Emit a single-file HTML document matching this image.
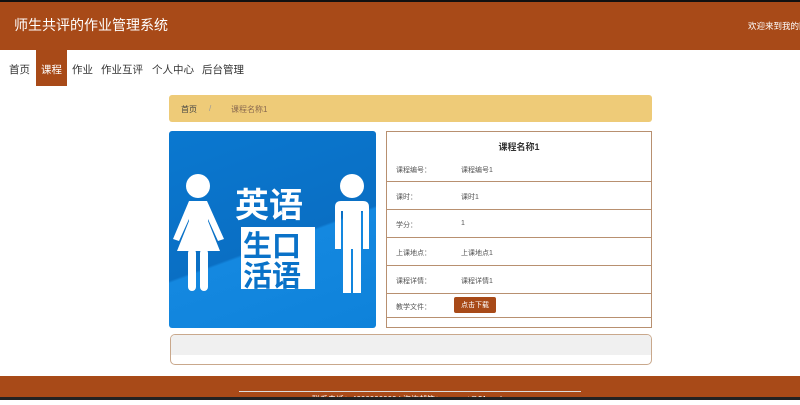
<!DOCTYPE html>
<html><head><meta charset="utf-8"><style>
*{margin:0;padding:0;box-sizing:border-box}
body{width:800px;height:400px;overflow:hidden;background:#fff;font-family:"Liberation Sans","Noto Sans CJK SC",sans-serif;position:relative}
.top{position:absolute;left:0;top:0;width:800px;height:2px;background:#111}
.hd{position:absolute;left:0;top:2px;width:800px;height:48px;background:#a84a18;color:#fff}
.hd .t{position:absolute;left:14px;top:13px;font-size:14px}
.hd .w{position:absolute;left:748px;top:18px;font-size:8.5px;white-space:nowrap}
.nav{position:absolute;top:50px;left:0;height:36px;font-size:10.5px;color:#333}
.nav span{position:absolute;top:12px;white-space:nowrap}
.nav .a{background:#a84a18;color:#fff;top:0;height:36px;padding-top:12px;left:36px;width:31px;text-align:center}
.bc{position:absolute;left:169px;top:95px;width:483px;height:27px;background:#eecb78;border-radius:3px;font-size:8px;color:#555}
.img{position:absolute;left:169px;top:131px;width:207px;height:197px;border-radius:3px;background:linear-gradient(160deg,#0a78d0 0%,#0a6fc4 55%,#1488e0 56%,#0e82da 100%);overflow:hidden}
.tb{position:absolute;left:386px;top:131px;width:266px;height:197px;border:1px solid #b89070;font-size:7px;color:#555}
.r{position:absolute;left:0;width:264px;border-bottom:1px solid #b89070}
.r b{position:absolute;left:9px;font-weight:normal}
.r i{position:absolute;left:74px;font-style:normal}
.box{position:absolute;left:170px;top:334px;width:482px;height:31px;border:1px solid #c9a88c;border-radius:5px;overflow:hidden}
.box div{height:20px;background:#f0f0f0}
.ft{position:absolute;left:0;top:376px;width:800px;height:24px;background:#a84a18}
.ft .l{position:absolute;left:239px;top:15px;width:342px;border-top:1px solid #ddd}
.ft .x{position:absolute;left:312px;top:18px;font-size:8px;color:#fff;white-space:nowrap}
.ft .bl{position:absolute;left:0;top:21px;width:800px;height:3px;background:#222}
</style></head><body>
<div class="top"></div>
<div class="hd"><div class="t">师生共评的作业管理系统</div><div class="w">欢迎来到我的网站</div></div>
<div class="nav">
<span style="left:9px">首页</span><span class="a">课程</span><span style="left:72px">作业</span><span style="left:101px">作业互评</span><span style="left:152px">个人中心</span><span style="left:202px">后台管理</span>
</div>
<div class="bc"><span style="position:absolute;left:12px;top:9px;color:#444">首页</span><span style="position:absolute;left:40px;top:9px;color:#999">/</span><span style="position:absolute;left:62px;top:9px;color:#8a6a50">课程名称1</span></div>
<div class="img">
<svg width="207" height="197" viewBox="0 0 207 197">
<g fill="#fff">
<circle cx="29" cy="55" r="12"/>
<path d="M20 70h18l17 38-6 2-10-22 0 2 12 30H8l12-30v-2L10 110l-6-2z"/>
<rect x="19" y="118" width="8" height="42" rx="4"/><rect x="31" y="118" width="8" height="42" rx="4"/>
<circle cx="183" cy="55" r="12"/>
<path d="M172 70h22q6 0 6 6v42h-6v-38h-2v82h-8v-44h-2v44h-8v-82h-2v38h-6v-42q0-6 6-6z"/>
</g>
<text x="66" y="86" font-size="34" font-weight="bold" fill="#fff" font-family="Noto Sans CJK SC,sans-serif">英语</text>
<rect x="72" y="96" width="74" height="62" fill="#fff"/>
<text x="74" y="125" font-size="29" font-weight="bold" fill="#0a72c8" font-family="Noto Sans CJK SC,sans-serif">生口</text>
<text x="74" y="155" font-size="29" font-weight="bold" fill="#0a72c8" font-family="Noto Sans CJK SC,sans-serif">活语</text>
</svg></div>
<div class="tb">
<div style="position:absolute;left:0;width:264px;top:8px;text-align:center;font-size:9px;font-weight:bold;color:#333">课程名称1</div>
<div class="r" style="top:26px;height:24px"><b style="top:7px">课程编号：</b><i style="top:7px">课程编号1</i></div>
<div class="r" style="top:50px;height:28px"><b style="top:10px">课时：</b><i style="top:10px">课时1</i></div>
<div class="r" style="top:78px;height:28px"><b style="top:10px">学分：</b><i style="top:10px">1</i></div>
<div class="r" style="top:106px;height:28px"><b style="top:10px">上课地点：</b><i style="top:10px">上课地点1</i></div>
<div class="r" style="top:134px;height:28px"><b style="top:10px">课程详情：</b><i style="top:10px">课程详情1</i></div>
<div class="r" style="top:162px;height:24px"><b style="top:8px">教学文件：</b><i style="top:3px;left:67px;background:#a84a18;color:#fff;padding:3px 7px;border-radius:2px">点击下载</i></div>
</div>
<div class="box"><div></div></div>
<div class="ft"><div class="l"></div><div class="x">联系电话：4000000000 | 咨询邮箱：support@21epub.com</div><div class="bl"></div></div>
</body></html>
